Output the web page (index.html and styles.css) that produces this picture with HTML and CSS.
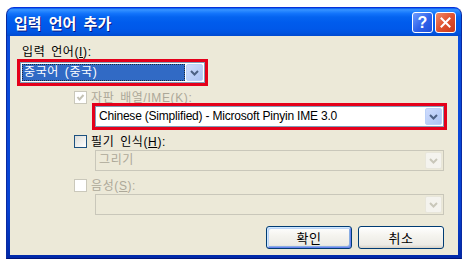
FILE: index.html
```html
<!DOCTYPE html>
<html lang="ko">
<head>
<meta charset="utf-8">
<title>입력 언어 추가</title>
<link rel="stylesheet" href="styles.css">
</head>
<body>
<div class="window">
  <div class="titlebar">
    <span class="title">입력 언어 추가</span>
    <div class="tb-buttons">
      <span class="tb-btn help">?</span>
      <span class="tb-btn close"><svg width="11" height="11" viewBox="0 0 11 11"><path d="M1.5 1.5 L9.5 9.5 M9.5 1.5 L1.5 9.5" stroke="#fff" stroke-width="2" stroke-linecap="square" fill="none"/></svg></span>
    </div>
  </div>
  <div class="client">
    <div class="label l1">입력 언어(<u>I</u>):</div>
    <div class="combo c1 marked">
      <span class="sel">중국어 (중국)</span>
      <span class="drop"><svg width="9" height="6" viewBox="0 0 9 6"><path d="M1 1 L4.5 4.5 L8 1" stroke="#4d6185" stroke-width="2" fill="none"/></svg></span>
    </div>
    <div class="row disabled">
      <span class="cb cb-dis"><svg width="9" height="9" viewBox="0 0 9 9"><path d="M1.5 4 L3.5 6.5 L7.5 2" stroke="#c4c2b4" stroke-width="2" fill="none"/></svg></span>
      <span class="rtext">자판 배열/IME(<u>K</u>):</span>
    </div>
    <div class="combo wide marked">
      <span class="val latin">Chinese (Simplified) - Microsoft Pinyin IME 3.0</span>
      <span class="drop"><svg width="9" height="6" viewBox="0 0 9 6"><path d="M1 1 L4.5 4.5 L8 1" stroke="#4d6185" stroke-width="2" fill="none"/></svg></span>
    </div>
    <div class="row">
      <span class="cb"></span>
      <span class="rtext">필기 인식(<u>H</u>):</span>
    </div>
    <div class="combo wide off">
      <span class="val">그리기</span>
      <span class="drop"><svg width="9" height="6" viewBox="0 0 9 6"><path d="M1 1 L4.5 4.5 L8 1" stroke="#c9c7ba" stroke-width="2" fill="none"/></svg></span>
    </div>
    <div class="row disabled">
      <span class="cb cb-dis"></span>
      <span class="rtext">음성(<u>S</u>):</span>
    </div>
    <div class="combo wide off">
      <span class="val"></span>
      <span class="drop"><svg width="9" height="6" viewBox="0 0 9 6"><path d="M1 1 L4.5 4.5 L8 1" stroke="#c9c7ba" stroke-width="2" fill="none"/></svg></span>
    </div>
    <div class="buttons">
      <button class="btn default">확인</button>
      <button class="btn">취소</button>
    </div>
  </div>
</div>
</body>
</html>
```
FILE: styles.css
```css
* { box-sizing: border-box; }
body {
  margin: 0;
  background: #fff;
  font-family: "Liberation Sans", "Noto Sans CJK KR", sans-serif;
  font-size: 12px;
  color: #000;
}
u { text-decoration: underline; }
.window {
  margin: 7px 0 0 6px;
  width: 456px;
  height: 252px;
  border: 1px solid #0a2aa0;
  border-top-color: #0831d9;
  border-bottom-color: #001478;
  border-radius: 8px 8px 0 0;
  background: linear-gradient(to bottom, #0a4fe0, #0842d2 80%, #0029a8);
  display: flex;
  flex-direction: column;
  overflow: hidden;
}
.titlebar {
  height: 28px;
  flex: none;
  display: flex;
  align-items: center;
  justify-content: space-between;
  padding: 0 5px 0 7px;
  background: linear-gradient(to bottom, #0058ee 0%, #3a93ff 6%, #2888ff 11%, #1273fb 20%, #0564f0 32%, #005ced 50%, #0058e9 75%, #0054e0 88%, #004ad0 100%);
}
.title {
  color: #fff;
  font-family: "Noto Sans CJK KR", sans-serif;
  font-weight: bold;
  font-size: 15px;
  word-spacing: 3px;
  text-shadow: 1px 1px #0a1883;
  line-height: 17px;
  margin-top: 1px;
}
.tb-buttons {
  display: flex;
  gap: 2px;
  align-self: flex-start;
  margin-top: 4px;
}
.tb-btn {
  width: 21px;
  height: 21px;
  border: 1px solid #fff;
  border-radius: 3px;
  display: flex;
  align-items: center;
  justify-content: center;
}
.help {
  background: linear-gradient(135deg, #6f9cff, #2f62ea 55%, #1f4fd8);
  color: #fff;
  font-family: "Liberation Sans", sans-serif;
  font-weight: bold;
  font-size: 16px;
  line-height: 16px;
}
.close {
  background: linear-gradient(135deg, #f08a6a, #e0522e 50%, #c8391c);
}
.client {
  flex: none;
  height: 219px;
  margin: 0 3px;
  background: #ece9d8;
  padding: 0 14px 0 10px;
  display: flex;
  flex-direction: column;
  align-items: flex-start;
}
.label {
  line-height: 14px;
  height: 14px;
  word-spacing: 2px;
  letter-spacing: 0.6px;
}
.l1 { margin-top: 9px; padding-left: 2px; }
.combo {
  height: 21px;
  border: 1px solid #7f9db9;
  background: #fff;
  padding: 1px;
  display: flex;
  align-items: stretch;
  flex: none;
}
.c1 { margin-top: 3px; width: 185px; }
.marked { outline: 3px solid #e4001b; }
.wide { width: 349px; margin-left: 75px; margin-top: 2px; }
.sel {
  flex: 1;
  margin-right: 1px;
  background: #316ac5;
  color: #fff;
  border: 1px dotted #1b2a40;
  padding-left: 1px;
  line-height: 15px;
  word-spacing: 2px;
  letter-spacing: 0.6px;
}
.val {
  flex: 1;
  padding-left: 2px;
  line-height: 17px;
  white-space: nowrap;
  overflow: hidden;
  letter-spacing: 0.6px;
}
.val.latin { letter-spacing: -0.2px; }
.drop {
  width: 17px;
  flex: none;
  border: 1px solid #bad0f8;
  border-radius: 2px;
  background: linear-gradient(135deg, #cfdcfd, #b9cdf7 60%, #aec3f3);
  display: flex;
  align-items: center;
  justify-content: center;
}
.off {
  border-color: #c9c7ba;
  background: #ece9d8;
}
.off .val { color: #aca899; }
.off .drop {
  border-color: #e8e6da;
  background: #f4f3ee;
}
.row {
  margin-top: 8px;
  padding-left: 54px;
  height: 13px;
  display: flex;
  align-items: center;
  gap: 4px;
  line-height: 14px;
  word-spacing: 2px;
  letter-spacing: 0.6px;
}
.disabled { color: #aca899; }
.cb {
  width: 13px;
  height: 13px;
  flex: none;
  border: 1px solid #1c5180;
  background: linear-gradient(135deg, #dcdcd7, #fff);
  display: flex;
  align-items: center;
  justify-content: center;
}
.cb-dis {
  border-color: #cac8bb;
  background: #fff;
}
.buttons {
  margin-top: 11px;
  align-self: stretch;
  display: flex;
  justify-content: flex-end;
  gap: 6px;
}
.btn {
  width: 86px;
  height: 23px;
  border: 1px solid #003c74;
  border-radius: 3px;
  background: linear-gradient(to bottom, #fff 0%, #f5f4ef 40%, #ecebe5 85%, #d6d0c5 100%);
  font-family: "Noto Sans CJK KR", sans-serif;
  font-size: 13px;
  letter-spacing: 0.5px;
  color: #000;
  padding: 0;
  margin: 0;
}
.default {
  box-shadow: inset 1px 1px #cee7ff, inset -1px -1px #6982ee, inset 2px 2px #bcd4f6, inset -2px -2px #89ade4;
}
```
